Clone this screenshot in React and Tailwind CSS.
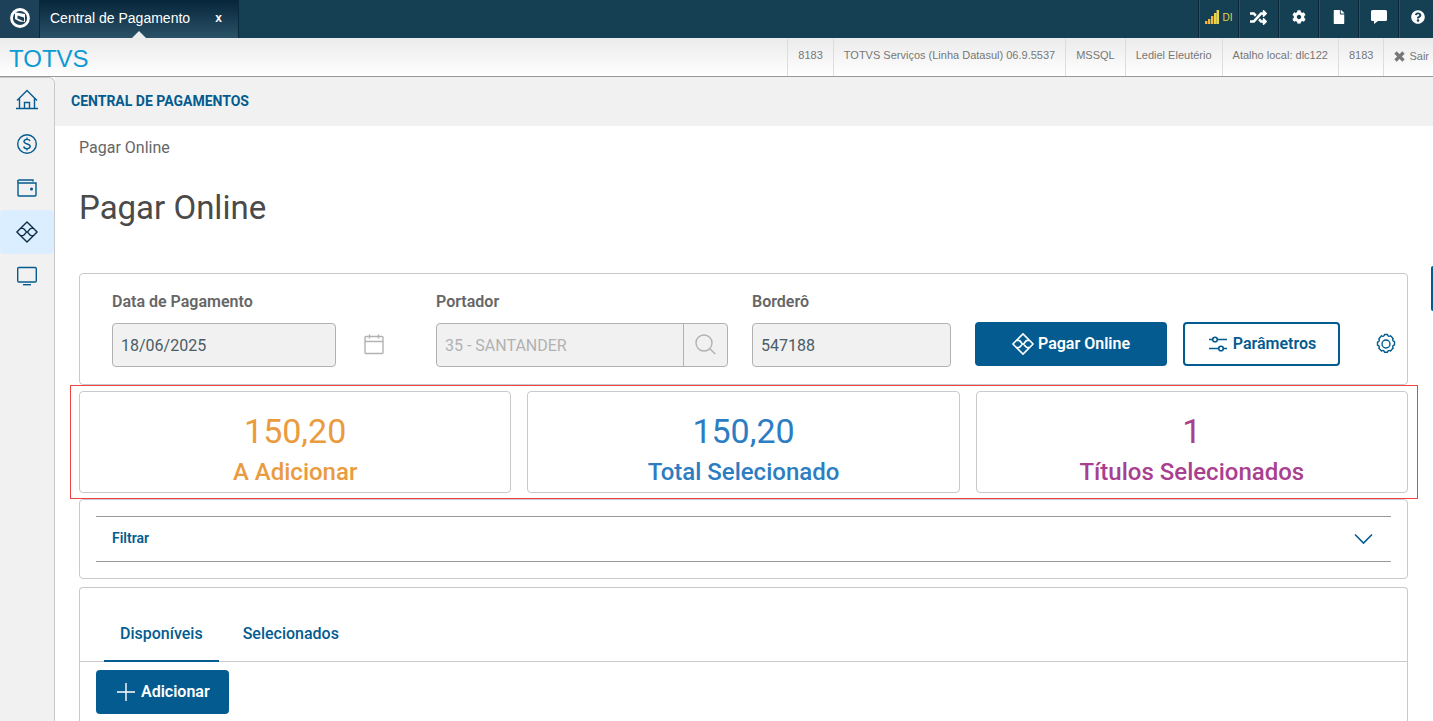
import { useState } from "react";
import {
  FaRandom,
  FaCog,
  FaFile,
  FaQuestionCircle,
} from "react-icons/fa";

const sessionInfo = [
  "8183",
  "TOTVS Serviços (Linha Datasul) 06.9.5537",
  "MSSQL",
  "Lediel Eleutério",
  "Atalho local: dlc122",
  "8183",
];

function Icon({ size = 22, width = 1.4, children }) {
  return (
    <svg
      width={size}
      height={size}
      viewBox="0 0 22 22"
      fill="none"
      stroke="currentColor"
      strokeWidth={width}
      className="shrink-0"
      aria-hidden="true"
    >
      {children}
    </svg>
  );
}

function HomeIcon() {
  return (
    <Icon>
      <path d="M0 19.5h22M3.5 19.5V9.5M18.5 19.5V9.5M1 11.5 11 1.5l10 10" />
      <path d="M8.5 19.5v-6h5v6" />
    </Icon>
  );
}

function MoneyIcon() {
  return (
    <Icon>
      <circle cx="11" cy="11" r="9.3" />
      <path d="M14 8.2c-.3-1.2-1.4-1.8-3-1.8-1.7 0-3 .8-3 2.2 0 3.2 6.2 1.5 6.2 4.7 0 1.5-1.4 2.3-3.2 2.3-1.7 0-3-.7-3.3-2.1M11 4.6v1.8M11 15.6v1.8" />
    </Icon>
  );
}

function WalletIcon() {
  return (
    <Icon>
      <path d="M17 4.500V3H3.200a1.300 1.300 0 0 0 0 3H20v12a1 1 0 0 1-1 1H3a1 1 0 0 1-1-1V4.500" />
      <circle cx="15.5" cy="12" r=".8" fill="currentColor" />
    </Icon>
  );
}

function PixIcon({ width }) {
  return (
    <Icon width={width}>
      <path d="M11 .9 21.1 11 11 21.1.9 11z" strokeLinejoin="round" />
      <path d="M4.800 7.400h1.700C9 7.400 9.300 11 11 11s2-3.600 4.500-3.600h1.700M4.800 14.600h1.700C9 14.600 9.300 11 11 11s2 3.600 4.500 3.600h1.700" />
    </Icon>
  );
}

function MonitorIcon() {
  return (
    <Icon>
      <rect x="1.7" y="2.5" width="18.6" height="14.5" rx="1.2" />
      <path d="M7 19.7h8" />
    </Icon>
  );
}

function CalendarIcon() {
  return (
    <Icon>
      <rect x="2" y="2.5" width="18" height="17" rx="1" />
      <path d="M2 7.500h18M6.500.5v4M15.500.5v4" />
    </Icon>
  );
}

function SearchIcon() {
  return (
    <Icon>
      <circle cx="9" cy="9" r="8" />
      <path d="m14.700 14.700 5.600 5.300" />
    </Icon>
  );
}

function SlidersIcon() {
  return (
    <Icon width={1.6}>
      <circle cx="8" cy="6.5" r="2.3" />
      <circle cx="14" cy="15.5" r="2.3" />
      <path d="M2 6.500h3.700M10.300 6.500H20M2 15.500h9.700M16.300 15.500H20" />
    </Icon>
  );
}

function GearIcon() {
  return (
    <Icon>
      <circle cx="11" cy="11" r="4" />
      <path
        strokeLinejoin="round"
        d="M9.500 1.500h3c.1 1.700 1.700 2.400 3 1.300l2.700 2.700c-1.100 1.300-.4 2.900 1.300 3v3.500c-1.700.1-2.400 1.700-1.300 3l-2.700 3c-1.300-1.100-2.900-.4-3 1.300h-3c-.1-1.700-1.700-2.400-3-1.300l-2.700-2.700c1.100-1.300.4-2.900-1.300-3V9c1.700-.1 2.400-1.700 1.300-3l2.700-3.200c1.300 1.100 2.900.4 3-1.300z"
      />
    </Icon>
  );
}

const menu = [
  { name: "Início", icon: <HomeIcon /> },
  { name: "Pagamentos", icon: <MoneyIcon /> },
  { name: "Carteira", icon: <WalletIcon /> },
  { name: "Pagar Online", icon: <PixIcon />, active: true },
  { name: "Monitor", icon: <MonitorIcon /> },
];

const totals = [
  { value: "150,20", label: "A Adicionar", color: "text-[#ea9b3e]" },
  { value: "150,20", label: "Total Selecionado", color: "text-[#2c7dc2]" },
  { value: "1", label: "Títulos Selecionados", color: "text-[#a8408f]" },
];

function TopBar() {
  const cell =
    "flex w-10 items-center justify-center border-l border-[#0a2a3b] pb-1 shadow-[inset_1px_0_0_#285468]";

  return (
    <header className="flex h-[38px] bg-[#154054] text-white font-['Liberation_Sans',Arial,sans-serif]">
      <button
        aria-label="Menu TOTVS"
        className="flex w-[39px] shrink-0 items-center justify-center bg-[#1d4158] pb-0.5"
      >
        <svg width="20" height="20" viewBox="0 0 20 20" fill="none">
          <circle cx="10" cy="10" r="8.5" stroke="#fff" strokeWidth="2.8" />
          <path d="M3.500 4 9 5l6 1v8l-5.500-.6L5 11V6z" fill="#fff" />
          <path d="m7.500 7.500 6.500 2v4l-6.500-3z" fill="#1d4158" />
        </svg>
      </button>
      <div className="relative flex w-[200px] shrink-0 items-center justify-between border-x border-[#0a2a3b] bg-linear-to-b from-[#06263a] to-[#2b5268] pr-4 pb-0.5 pl-[10px] text-sm">
        <span className="whitespace-nowrap">Central de Pagamento</span>
        <button
          aria-label="Fechar aba"
          className="text-xs leading-5 font-bold"
        >
          x
        </button>
        <span className="absolute bottom-0 left-1/2 -translate-x-1/2 border-x-[7px] border-b-[7px] border-x-transparent border-b-[#ededed]" />
      </div>
      <nav className="ml-auto flex">
        <button
          className={`${cell} gap-1 text-[10px] text-[#e8d44a]`}
          aria-label="Conexão DI"
        >
          <svg width="14" height="14" viewBox="0 0 14 14" fill="#f0b840">
            <path d="M0 11h2.400v3H0zM3 9h2.400v5H3zM6 6h2.400v8H6z" />
            <path d="M9 3h2.400v11H9zM11.600 0H14v14h-2.400z" fill="#e8d44a" />
          </svg>
          DI
        </button>
        <button className={cell} aria-label="Trocar empresa">
          <FaRandom size={17} />
        </button>
        <button className={cell} aria-label="Configurações">
          <FaCog size={14} />
        </button>
        <button className={cell} aria-label="Documentos">
          <FaFile size={14} />
        </button>
        <button className={cell} aria-label="Mensagens">
          <svg width="16" height="14" viewBox="0 0 16 14" fill="currentColor">
            <path d="M1.500 0h13A1.500 1.500 0 0 1 16 1.500v8a1.500 1.500 0 0 1-1.500 1.500H7l-4 3v-3H1.500A1.500 1.500 0 0 1 0 9.500v-8A1.500 1.500 0 0 1 1.500 0z" />
          </svg>
        </button>
        <button
          className="flex w-[35px] items-center justify-center border-l border-[#0a2a3b] pb-1 pl-1 shadow-[inset_1px_0_0_#285468]"
          aria-label="Ajuda"
        >
          <FaQuestionCircle size={14} />
        </button>
      </nav>
    </header>
  );
}

function SessionBar() {
  return (
    <div className="flex h-[39px] border-b border-[#999] bg-linear-to-b from-[#ebebeb] to-white font-['Liberation_Sans',Arial,sans-serif]">
      <a href="#" className="pl-[9px] text-2xl leading-[42px] text-[#0d9bd3]">
        TOTVS
      </a>
      <div className="ml-auto flex text-[11px] leading-[34px] text-[#777]">
        {sessionInfo.map((info, i) => (
          <span
            key={i}
            className="border-l border-[#ddd] px-[10px] whitespace-nowrap"
          >
            {info}
          </span>
        ))}
        <button className="flex items-center gap-1 border-l border-[#ddd] pr-1 pb-0.5 pl-[10px]">
          <svg width="11" height="11" viewBox="0 0 11 11" aria-hidden="true">
            <path
              d="m1.500 1.500 8 8M9.500 1.500l-8 8"
              stroke="currentColor"
              strokeWidth="3.2"
            />
          </svg>
          Sair
        </button>
      </div>
    </div>
  );
}

export default function App() {
  const [tab, setTab] = useState("Disponíveis");
  const card = "rounded-[4px] border border-[#c9c9c9]";
  const input =
    "h-11 w-full min-w-0 rounded-[4px] border border-[#b2b2b2] bg-[#f1f1f1] px-2 text-base";
  const label = "mb-[11px] block text-base leading-5 font-semibold text-[#666]";

  return (
    <div className="flex min-h-screen flex-col bg-white font-[Roboto,sans-serif]">
      <TopBar />
      <SessionBar />

      <div className="flex flex-1">
        <aside className="w-[55px] shrink-0 rounded-tr-[6px] border-t border-r border-[#c9c9c9] bg-[#f1f1f1]">
          {menu.map((item) => (
            <a
              key={item.name}
              href="#"
              aria-label={item.name}
              className={`flex h-11 items-center justify-center pb-px ${
                item.active
                  ? "rounded-[4px] bg-[#dbeeff] text-[#0c2f47]"
                  : "text-[#045b8f]"
              }`}
            >
              {item.icon}
            </a>
          ))}
        </aside>

        <div className="flex min-w-0 flex-1 flex-col">
          <div className="flex h-[49px] items-center bg-[#f1f1f1] px-4 pb-0.5 text-sm font-bold text-[#045b8f]">
            CENTRAL DE PAGAMENTOS
          </div>

          <main className="relative flex flex-1 flex-col pt-[10px] pr-[25px] pl-6">
            <nav className="text-base leading-6 text-[#666]">Pagar Online</nav>
            <h1 className="mt-[26px] mb-[43px] text-[33px] leading-11 text-[#4a4a4a]">
              Pagar Online
            </h1>

            <form
              className={`${card} grid grid-cols-[300fr_292fr_199fr_432fr] gap-6 pl-8`}
            >
              <div className="pt-[18px] pb-[17px]">
                <label htmlFor="data" className={label}>
                  Data de Pagamento
                </label>
                <div className="flex">
                  <input
                    id="data"
                    defaultValue="18/06/2025"
                    className={`${input} text-[#4a5c66]`}
                  />
                  <button
                    type="button"
                    aria-label="Abrir calendário"
                    className="flex h-11 w-[76px] shrink-0 items-center justify-center text-[#b2b2b2]"
                  >
                    <CalendarIcon />
                  </button>
                </div>
              </div>

              <div className="pt-[18px] pb-[17px]">
                <label htmlFor="portador" className={label}>
                  Portador
                </label>
                <div className="flex h-11 overflow-hidden rounded-[4px] border border-[#b2b2b2] bg-[#f1f1f1] text-[#b2b2b2]">
                  <input
                    id="portador"
                    disabled
                    defaultValue="35 - SANTANDER"
                    className="min-w-0 flex-1 px-2 pt-px text-base"
                  />
                  <button
                    type="button"
                    aria-label="Buscar portador"
                    className="flex w-11 items-center justify-center border-l border-[#b2b2b2]"
                  >
                    <SearchIcon />
                  </button>
                </div>
              </div>

              <div className="pt-[18px] pb-[17px]">
                <label htmlFor="bordero" className={label}>
                  Borderô
                </label>
                <input
                  id="bordero"
                  defaultValue="547188"
                  className={`${input} text-[#4a5c66]`}
                />
              </div>

              <div className="grid grid-cols-[192fr_157fr_51px] gap-4 pt-12">
                <button
                  type="button"
                  className="flex h-11 items-center justify-center gap-1 rounded-[4px] bg-[#045b8f] font-semibold text-white"
                >
                  <PixIcon width={1.6} />
                  Pagar Online
                </button>
                <button
                  type="button"
                  className="flex h-11 items-center justify-center gap-1 rounded-[4px] border-2 border-[#045b8f] font-semibold text-[#045b8f]"
                >
                  <SlidersIcon />
                  Parâmetros
                </button>
                <button
                  type="button"
                  aria-label="Opções"
                  className="flex h-11 items-center justify-center pl-2 text-[#045b8f]"
                >
                  <GearIcon />
                </button>
              </div>
            </form>

            <section className="relative my-[6px] grid grid-cols-3 gap-4">
              {totals.map((total) => (
                <div
                  key={total.label}
                  className={`${card} ${total.color} pt-[19px] pb-1 text-center`}
                >
                  <p className="text-[34px] leading-10">{total.value}</p>
                  <p className="mt-[5px] text-2xl leading-8 font-medium">
                    {total.label}
                  </p>
                </div>
              ))}
              <div className="pointer-events-none absolute -inset-y-[6px] -right-[10px] -left-[9px] border border-[#ee4444]" />
            </section>

            <section className={`${card} p-4`}>
              <button className="flex h-[46px] w-full items-center justify-between border-y border-[#999] px-4 pb-0.5 text-sm font-semibold text-[#045b8f]">
                Filtrar
                <Icon width={1.6}>
                  <path d="m2 7.500 8.500 8.500L19 7.500" />
                </Icon>
              </button>
            </section>

            <section className="mt-2 flex-1 rounded-t-[4px] border border-b-0 border-[#c9c9c9]">
              <div className="flex gap-2 border-b border-[#c9c9c9] px-6 pt-7">
                {["Disponíveis", "Selecionados"].map((name) => (
                  <button
                    key={name}
                    onClick={() => setTab(name)}
                    className={`-mb-px border-b-2 px-4 pb-2 leading-9 font-medium text-[#045b8f] ${
                      tab === name ? "border-[#045b8f]" : "border-transparent"
                    }`}
                  >
                    {name}
                  </button>
                ))}
              </div>
              <div className="px-4 pt-2">
                <button className="flex h-11 items-center gap-1 rounded-[4px] bg-[#045b8f] px-[19px] font-semibold text-white">
                  <Icon>
                    <path d="M2 11h18M11 2v18" />
                  </Icon>
                  Adicionar
                </button>
              </div>
            </section>

            <div className="absolute top-[140px] right-0 h-[45px] w-[2px] rounded-l-sm bg-[#045b8f]" />
          </main>
        </div>
      </div>
    </div>
  );
}
